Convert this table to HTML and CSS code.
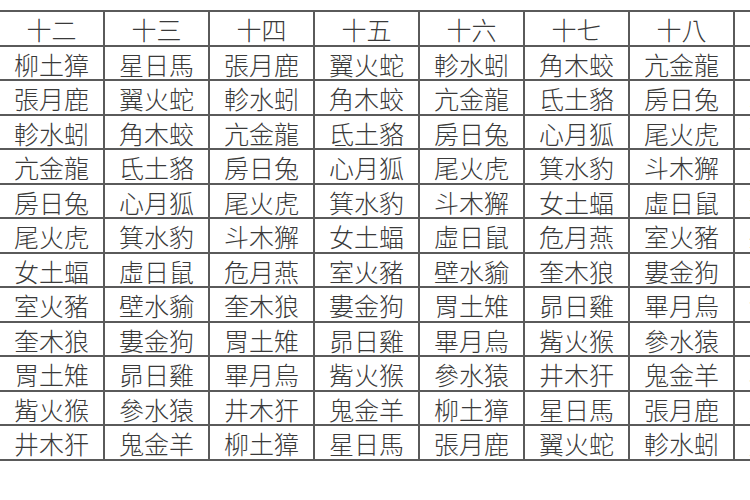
FILE: index.html
```html
<!DOCTYPE html>
<html lang="zh-Hant">
<head>
<meta charset="utf-8">
<title>二十八宿表</title>
<link rel="stylesheet" href="styles.css">
</head>
<body>
<div class="sheet">
  <div class="grid">
    <div class="cell head">十二</div><div class="cell head">十三</div><div class="cell head">十四</div><div class="cell head">十五</div><div class="cell head">十六</div><div class="cell head">十七</div><div class="cell head">十八</div><div class="cell head"></div>

    <div class="cell">柳土獐</div><div class="cell">星日馬</div><div class="cell">張月鹿</div><div class="cell">翼火蛇</div><div class="cell">軫水蚓</div><div class="cell">角木蛟</div><div class="cell">亢金龍</div><div class="cell">氐土貉</div>

    <div class="cell">張月鹿</div><div class="cell">翼火蛇</div><div class="cell">軫水蚓</div><div class="cell">角木蛟</div><div class="cell">亢金龍</div><div class="cell">氐土貉</div><div class="cell">房日兔</div><div class="cell">心月狐</div>

    <div class="cell">軫水蚓</div><div class="cell">角木蛟</div><div class="cell">亢金龍</div><div class="cell">氐土貉</div><div class="cell">房日兔</div><div class="cell">心月狐</div><div class="cell">尾火虎</div><div class="cell">箕水豹</div>

    <div class="cell">亢金龍</div><div class="cell">氐土貉</div><div class="cell">房日兔</div><div class="cell">心月狐</div><div class="cell">尾火虎</div><div class="cell">箕水豹</div><div class="cell">斗木獬</div><div class="cell">女土蝠</div>

    <div class="cell">房日兔</div><div class="cell">心月狐</div><div class="cell">尾火虎</div><div class="cell">箕水豹</div><div class="cell">斗木獬</div><div class="cell">女土蝠</div><div class="cell">虛日鼠</div><div class="cell">危月燕</div>

    <div class="cell">尾火虎</div><div class="cell">箕水豹</div><div class="cell">斗木獬</div><div class="cell">女土蝠</div><div class="cell">虛日鼠</div><div class="cell">危月燕</div><div class="cell">室火豬</div><div class="cell">壁水貐</div>

    <div class="cell">女土蝠</div><div class="cell">虛日鼠</div><div class="cell">危月燕</div><div class="cell">室火豬</div><div class="cell">壁水貐</div><div class="cell">奎木狼</div><div class="cell">婁金狗</div><div class="cell">胃土雉</div>

    <div class="cell">室火豬</div><div class="cell">壁水貐</div><div class="cell">奎木狼</div><div class="cell">婁金狗</div><div class="cell">胃土雉</div><div class="cell">昴日雞</div><div class="cell">畢月烏</div><div class="cell">觜火猴</div>

    <div class="cell">奎木狼</div><div class="cell">婁金狗</div><div class="cell">胃土雉</div><div class="cell">昴日雞</div><div class="cell">畢月烏</div><div class="cell">觜火猴</div><div class="cell">參水猿</div><div class="cell">井木犴</div>

    <div class="cell">胃土雉</div><div class="cell">昴日雞</div><div class="cell">畢月烏</div><div class="cell">觜火猴</div><div class="cell">參水猿</div><div class="cell">井木犴</div><div class="cell">鬼金羊</div><div class="cell">柳土獐</div>

    <div class="cell">觜火猴</div><div class="cell">參水猿</div><div class="cell">井木犴</div><div class="cell">鬼金羊</div><div class="cell">柳土獐</div><div class="cell">星日馬</div><div class="cell">張月鹿</div><div class="cell">翼火蛇</div>

    <div class="cell">井木犴</div><div class="cell">鬼金羊</div><div class="cell">柳土獐</div><div class="cell">星日馬</div><div class="cell">張月鹿</div><div class="cell">翼火蛇</div><div class="cell">軫水蚓</div><div class="cell">角木蛟</div>
  </div>
</div>
</body>
</html>
```

FILE: styles.css
```css
html, body {
  margin: 0;
  padding: 0;
  background: #ffffff;
}

body {
  width: 750px;
  height: 500px;
  overflow: hidden;
  font-family: "Noto Sans CJK TC", "Noto Sans CJK SC", sans-serif;
}

.sheet {
  padding-top: 10px;
  margin-left: -2px;
  width: 900px;
}

.grid {
  display: inline-grid;
  grid-template-columns: repeat(8, 103px);
  grid-auto-rows: 32.5px;
  gap: 2px;
  padding: 2px;
  background: #5a5a5a;
}

.cell {
  background: #ffffff;
  display: flex;
  align-items: center;
  justify-content: center;
  font-size: 25px;
  font-weight: 300;
  line-height: 1.2;
  color: #3a3a3a;
  white-space: nowrap;
  padding-top: 2px;
  box-sizing: border-box;
}
```
